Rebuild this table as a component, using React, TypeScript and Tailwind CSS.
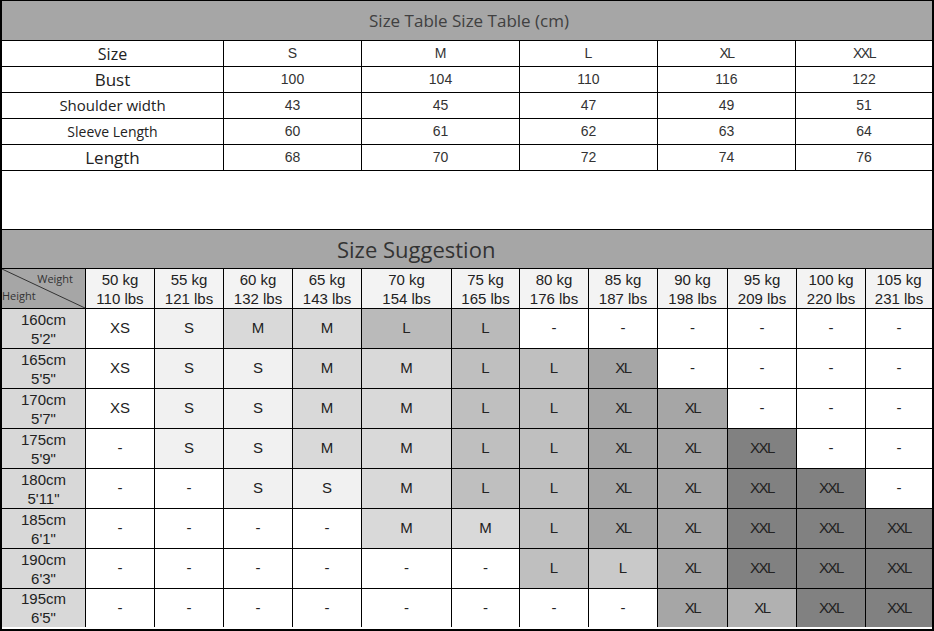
import React from "react";

const sizeRows: { label: string; cls: string; vals: string[] }[] = [
  { label: "Size", cls: "text-[16px]", vals: ["S", "M", "L", "XL", "XXL"] },
  { label: "Bust", cls: "text-[17px]", vals: ["100", "104", "110", "116", "122"] },
  { label: "Shoulder width", cls: "text-[15px]", vals: ["43", "45", "47", "49", "51"] },
  { label: "Sleeve Length", cls: "text-[14px]", vals: ["60", "61", "62", "63", "64"] },
  { label: "Length", cls: "text-[17px]", vals: ["68", "70", "72", "74", "76"] },
];

const weights = [
  ["50 kg", "110 lbs"],
  ["55 kg", "121 lbs"],
  ["60 kg", "132 lbs"],
  ["65 kg", "143 lbs"],
  ["70 kg", "154 lbs"],
  ["75 kg", "165 lbs"],
  ["80 kg", "176 lbs"],
  ["85 kg", "187 lbs"],
  ["90 kg", "198 lbs"],
  ["95 kg", "209 lbs"],
  ["100 kg", "220 lbs"],
  ["105 kg", "231 lbs"],
];

const grid: { h: [string, string]; v: string[] }[] = [
  { h: ["160cm", "5'2\""], v: ["XS", "S", "M", "M", "L", "L", "-", "-", "-", "-", "-", "-"] },
  { h: ["165cm", "5'5\""], v: ["XS", "S", "S", "M", "M", "L", "L", "XL", "-", "-", "-", "-"] },
  { h: ["170cm", "5'7\""], v: ["XS", "S", "S", "M", "M", "L", "L", "XL", "XL", "-", "-", "-"] },
  { h: ["175cm", "5'9\""], v: ["-", "S", "S", "M", "M", "L", "L", "XL", "XL", "XXL", "-", "-"] },
  { h: ["180cm", "5'11\""], v: ["-", "-", "S", "S", "M", "L", "L", "XL", "XL", "XXL", "XXL", "-"] },
  { h: ["185cm", "6'1\""], v: ["-", "-", "-", "-", "M", "M", "L", "XL", "XL", "XXL", "XXL", "XXL"] },
  { h: ["190cm", "6'3\""], v: ["-", "-", "-", "-", "-", "-", "L", "L", "XL", "XXL", "XXL", "XXL"] },
  { h: ["195cm", "6'5\""], v: ["-", "-", "-", "-", "-", "-", "-", "-", "XL", "XL", "XXL", "XXL"] },
];

function bg(v: string, r: number, c: number): string {
  if (r === 6 && c === 7) return "bg-[#c9c9c9]";
  if (r === 7 && c === 9) return "bg-[#b1b1b1]";
  if (r === 0 && (c === 4 || c === 5)) return "bg-[#bababa]";
  switch (v) {
    case "S":
      return "bg-[#f1f1f1]";
    case "M":
      return "bg-[#d9d9d9]";
    case "L":
      return "bg-[#bfbfbf]";
    case "XL":
      return "bg-[#a6a6a6]";
    case "XXL":
      return "bg-[#818181]";
    default:
      return "bg-white";
  }
}

export default function App() {
  return (
    <div className="w-[934px] h-[631px] bg-white border-l-2 border-r-2 border-t border-b-2 border-black flex flex-col overflow-hidden text-[#222]">
      {/* Size table */}
      <div className="grid grid-cols-[221px_137px_157px_137px_137px_136px] gap-px bg-black border-b border-black">
        <div className="col-span-6 h-[39px] bg-[#a6a6a6] flex items-center justify-center font-['Open_Sans',sans-serif] text-[17px] text-[#404040] pl-[4px]">
          Size Table Size Table (cm)
        </div>
        {sizeRows.map((row) => (
          <React.Fragment key={row.label}>
            <div className={`h-[25px] bg-white flex items-center justify-center font-['Open_Sans',sans-serif] text-[#222] ${row.cls}`}>
              {row.label}
            </div>
            {row.vals.map((v, i) => (
              <div
                key={i}
                className={`h-[25px] bg-white flex items-center justify-center font-['Liberation_Sans',Arial,sans-serif] text-[14px] text-[#333] ${
                  v === "XL" || v === "XXL" ? "tracking-[-1.5px]" : ""
                }`}
              >
                {v}
              </div>
            ))}
          </React.Fragment>
        ))}
      </div>

      {/* blank gap */}
      <div className="h-[59px] bg-white border-b border-black" />

      {/* Suggestion title */}
      <div className="h-[39px] bg-[#a6a6a6] border-b border-black flex items-center pl-[335px] font-['Open_Sans',sans-serif] text-[22px] text-[#333]">
        Size Suggestion
      </div>

      {/* Suggestion grid */}
      <div className="grid grid-cols-[83px_68px_68px_68px_68px_89px_67px_68px_68px_69px_68px_68px_66px] grid-rows-[39px_39px_39px_39px_39px_39px_39px_39px_38px] gap-px bg-black font-['Liberation_Sans',Arial,sans-serif]">
        <div className="relative bg-[#a6a6a6] font-['Open_Sans',sans-serif] text-[11px] text-[#333]">
          <svg className="absolute inset-0" width="83" height="39" viewBox="0 0 83 39">
            <line x1="0" y1="0" x2="83" y2="39" stroke="#333" strokeWidth="1" />
          </svg>
          <span className="absolute right-[12px] top-[2px]">Weight</span>
          <span className="absolute left-[0px] bottom-[4px]">Height</span>
        </div>
        {weights.map(([kg, lbs]) => (
          <div key={kg} className="bg-[#f3f3f3] flex flex-col items-center justify-center text-[15px] leading-[19px] text-[#222]">
            <span>{kg}</span>
            <span>{lbs}</span>
          </div>
        ))}
        {grid.map((row, r) => (
          <React.Fragment key={row.h[0]}>
            <div className="bg-[#d8d8d8] flex flex-col items-center justify-center text-[15px] leading-[19px] text-[#222]">
              <span>{row.h[0]}</span>
              <span>{row.h[1]}</span>
            </div>
            {row.v.map((v, c) => (
              <div
                key={c}
                className={`${bg(v, r, c)} flex items-center justify-center text-[15px] text-[#222] ${
                  v === "XL" || v === "XXL" ? "tracking-[-1.5px]" : ""
                }`}
              >
                {v}
              </div>
            ))}
          </React.Fragment>
        ))}
      </div>
    </div>
  );
}
